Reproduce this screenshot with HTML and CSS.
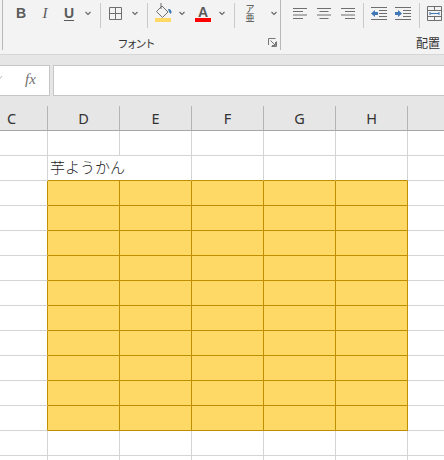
FILE: index.html
```html
<!DOCTYPE html>
<html lang="ja">
<head>
<meta charset="utf-8">
<title>Excel</title>
<link rel="stylesheet" href="styles.css">
</head>
<body>
<div class="app">
  <div class="ribbon">
    <div class="group font-group">
      <div class="tools">
        <span class="btn glyph bold">B</span>
        <span class="btn glyph italic">I</span>
        <span class="btn glyph under">U</span>
        <svg class="chev" viewBox="0 0 14 24"><path d="M4.500 12 7 14.500l2.500-2.500"/></svg>
        <span class="sep s-a"></span>
        <svg class="btn icon" viewBox="0 0 24 24"><path class="gline" d="M5.500 7.500h12v12h-12zM11.500 7.500v12M5.500 13.500h12"/></svg>
        <svg class="chev" viewBox="0 0 14 24"><path d="M4.500 12 7 14.500l2.500-2.500"/></svg>
        <span class="sep s-a"></span>
        <svg class="btn icon fill-icon" viewBox="0 0 24 24">
          <path class="gline" d="M5.500 11.500 11 6l6 6-5.500 5.500z"/>
          <path class="gline" d="M10 3v6"/>
          <path class="blue" d="M17 9c2-.5 3.500 1 3.500 3.500l-1 1.500-1.500-2z"/>
          <rect class="yellow" x="4" y="18" width="16" height="4"/>
        </svg>
        <svg class="chev narrow" viewBox="0 0 14 24"><path d="M4.500 12 7 14.500l2.500-2.500"/></svg>
        <span class="btn color-a"><span class="a-letter">A</span><span class="a-bar"></span></span>
        <svg class="chev" viewBox="0 0 14 24"><path d="M4.500 12 7 14.500l2.500-2.500"/></svg>
        <span class="sep s-b"></span>
        <span class="btn phon">ア<br>亜</span>
        <svg class="chev wide" viewBox="0 0 14 24"><path d="M4.500 12 7 14.500l2.500-2.500"/></svg>
      </div>
      <div class="group-label">
        <span class="label-text">フォント</span>
        <svg class="launcher" viewBox="0 0 9 9"><path d="M.5 7V.5H7.500M2.500 2.500 7 7M4 7.500h3.500V4M3.500 8.500h5v-5"/></svg>
      </div>
    </div>
    <div class="group align-group">
      <div class="tools">
        <svg class="btn24 icon" viewBox="0 0 24 24"><path class="gline" d="M5 8.500h14M5 11.500h10M5 15h14M5 18.500h10"/></svg>
        <svg class="btn24 icon" viewBox="0 0 24 24"><path class="gline" d="M5 8.500h14M7.500 11.500h9M5 15h14M7.500 18.500h9"/></svg>
        <svg class="btn24 icon" viewBox="0 0 24 24"><path class="gline" d="M5 8.500h14M9 11.500h10M5 15h14M9 18.500h10"/></svg>
        <span class="sep s-c"></span>
        <svg class="btn24 icon" viewBox="0 0 24 24"><path class="gline" d="M4 7.500h16M12 10.500h8M12 13.500h8M12 16.500h8M4 19.500h16"/><path class="blue" d="M4 13.500 8 10v2h3v3H8v2z"/></svg>
        <svg class="btn24 icon" viewBox="0 0 24 24"><path class="gline" d="M4 7.500h16M12 10.500h8M12 13.500h8M12 16.500h8M4 19.500h16"/><path class="blue" d="M11 13.500 7 10v2H4v3h3v2z"/></svg>
        <span class="sep s-d"></span>
        <svg class="btn24 icon merge" viewBox="0 0 24 24"><path class="gline" d="M4.500 6.500h14v14h-14zM4.500 10.500h14M4.500 16.500h14M11.500 6.500v4M11.500 16.500v4"/><path class="blueline" d="M7 13.500h9M7 12v3M16 12v3"/></svg>
      </div>
      <div class="group-label align-label"><span class="label-text">配置</span></div>
    </div>
  </div>

  <div class="formula-zone">
    <div class="name-box">
      <svg class="name-chev" viewBox="0 0 6 6"><path d="M0 1 2 3.500 4 1"/></svg>
      <span class="fx">fx</span>
    </div>
    <div class="formula-input"></div>
  </div>

  <div class="sheet">
    <div class="headers">
      <div class="h">C</div><div class="h">D</div><div class="h">E</div><div class="h">F</div><div class="h">G</div><div class="h">H</div><div class="h"></div>
    </div>
    <div class="cells">
      <div class="c"></div><div class="c"></div><div class="c"></div><div class="c"></div><div class="c"></div><div class="c"></div><div class="c"></div>

      <div class="c"></div><div class="c gb title">芋ようかん</div><div class="c gb"></div><div class="c gb"></div><div class="c gb"></div><div class="c"></div>

      <div class="c gr"></div><div class="c y"></div><div class="c y"></div><div class="c y"></div><div class="c y"></div><div class="c y"></div><div class="c"></div>
      <div class="c gr"></div><div class="c y"></div><div class="c y"></div><div class="c y"></div><div class="c y"></div><div class="c y"></div><div class="c"></div>
      <div class="c gr"></div><div class="c y"></div><div class="c y"></div><div class="c y"></div><div class="c y"></div><div class="c y"></div><div class="c"></div>
      <div class="c gr"></div><div class="c y"></div><div class="c y"></div><div class="c y"></div><div class="c y"></div><div class="c y"></div><div class="c"></div>
      <div class="c gr"></div><div class="c y"></div><div class="c y"></div><div class="c y"></div><div class="c y"></div><div class="c y"></div><div class="c"></div>
      <div class="c gr"></div><div class="c y"></div><div class="c y"></div><div class="c y"></div><div class="c y"></div><div class="c y"></div><div class="c"></div>
      <div class="c gr"></div><div class="c y"></div><div class="c y"></div><div class="c y"></div><div class="c y"></div><div class="c y"></div><div class="c"></div>
      <div class="c gr"></div><div class="c y"></div><div class="c y"></div><div class="c y"></div><div class="c y"></div><div class="c y"></div><div class="c"></div>
      <div class="c gr"></div><div class="c y"></div><div class="c y"></div><div class="c y"></div><div class="c y"></div><div class="c y"></div><div class="c"></div>
      <div class="c gr"></div><div class="c y"></div><div class="c y"></div><div class="c y"></div><div class="c y"></div><div class="c y"></div><div class="c"></div>

      <div class="c"></div><div class="c"></div><div class="c"></div><div class="c"></div><div class="c"></div><div class="c"></div><div class="c"></div>
      <div class="c"></div><div class="c"></div><div class="c"></div><div class="c"></div><div class="c"></div><div class="c"></div><div class="c"></div>
    </div>
  </div>
</div>
</body>
</html>
```

FILE: styles.css
```css
* { box-sizing: border-box; }
html, body { margin: 0; padding: 0; }
body {
  width: 444px;
  height: 460px;
  overflow: hidden;
  background: #fff;
  font-family: "Noto Sans", "Noto Sans CJK JP", sans-serif;
}
.app { width: 444px; height: 460px; overflow: hidden; }

/* Ribbon */
.ribbon {
  display: flex;
  height: 55px;
  padding-left: 2px;
  background: #f3f3f3;
  border-bottom: 1px solid #d6d6d6;
}
.group { display: flex; flex-direction: column; height: 50px; }
.font-group { width: 279px; border-left: 1px solid #b8b8b8; border-right: 1px solid #b8b8b8; }
.align-group { flex: 1; min-width: 0; }
.tools { display: flex; align-items: flex-start; height: 39px; }
.font-group .tools { padding: 0 0 0 6px; }
.align-group .tools { padding: 0 0 0 7px; }

.btn { display: block; width: 24px; height: 24px; flex: none; }
.btn24 { display: block; width: 24px; height: 24px; flex: none; }
.chev { display: block; width: 14px; height: 24px; flex: none; }
.chev path { fill: none; stroke: #666; stroke-width: 1.1; }
.chev.narrow { margin-right: 2px; }
.chev.wide { margin-left: 5px; }
.sep { display: block; width: 1px; height: 25px; margin-top: 3px; background: #c9c9c9; flex: none; }
.s-a { margin-left: 5px; margin-right: 3px; }
.s-b { margin-left: 5px; margin-right: 3px; }
.s-c { margin-left: 3px; margin-right: 3px; }
.s-d { margin-left: 4px; margin-right: 3px; }

.glyph {
  font-family: "Liberation Sans", sans-serif;
  font-size: 14px;
  line-height: 27px;
  text-align: center;
  color: #5a5a5a;
}
.bold { font-weight: 700; }
.italic { font-family: "Liberation Serif", serif; font-style: italic; font-size: 15px; }
.under { font-weight: 700; text-decoration: underline; text-underline-offset: 2px; }

.gline { fill: none; stroke: #6f6f6f; stroke-width: 1; }
.blue { fill: #3f78b4; }
.blueline { fill: none; stroke: #3f78b4; stroke-width: 1; }
.yellow { fill: #ffd966; }

.color-a { display: flex; flex-direction: column; align-items: center; }
.a-letter {
  font-family: "Liberation Sans", sans-serif;
  font-weight: 700;
  font-size: 14px;
  line-height: 13px;
  height: 12px;
  margin-top: 6px;
  color: #5a5a5a;
}
.a-bar { display: block; width: 16px; height: 4px; background: #f00; }

.phon {
  padding-top: 5px;
  font-family: "Noto Sans CJK JP", sans-serif;
  font-size: 9px;
  line-height: 8.500px;
  text-align: center;
  color: #444;
}

.group-label {
  position: relative;
  display: flex;
  justify-content: center;
  font-family: "Noto Sans CJK JP", sans-serif;
  font-size: 11px;
  line-height: 14px;
  color: #333;
}
.font-group .group-label { padding-right: 12px; letter-spacing: -2px; }
.align-label { justify-content: flex-end; padding-right: 4px; }
.align-label .label-text { font-size: 12px; }
.launcher { position: absolute; right: 3px; top: 2px; width: 9px; height: 9px; }
.launcher path { fill: none; stroke: #777; stroke-width: 1; }

/* Formula bar */
.formula-zone {
  display: flex;
  height: 50px;
  padding: 10px 0 9px;
  background: #e6e6e6;
}
.name-box {
  position: relative;
  width: 50px;
  height: 31px;
  flex: none;
  background: #fff;
  border: 1px solid #c6c6c6;
  border-left: 0;
}
.name-chev { position: absolute; left: -2px; top: 9px; width: 6px; height: 6px; }
.name-chev path { fill: none; stroke: #bbb; stroke-width: 1; }
.fx {
  position: absolute;
  left: 25px;
  top: 4px;
  font-family: "Liberation Serif", serif;
  font-style: italic;
  font-size: 15px;
  line-height: 18px;
  color: #707070;
}
.formula-input {
  flex: 1;
  height: 31px;
  margin-left: 3px;
  background: #fff;
  border: 1px solid #c6c6c6;
  border-right: 0;
}

/* Sheet */
.sheet { margin-left: -24px; width: 504px; }
.headers {
  display: grid;
  grid-template-columns: repeat(7, 72px);
  height: 26px;
  background: #e6e6e6;
  border-bottom: 1px solid #a8a8a8;
}
.h {
  padding-top: 1px;
  border-right: 1px solid #b4b4b4;
  margin-top: 1px;
  font-size: 14.500px;
  line-height: 22px;
  text-align: center;
  color: #333;
}
.cells {
  display: grid;
  grid-template-columns: repeat(7, 72px);
  grid-auto-rows: 25px;
}
.c { border-right: 1px solid #d4d4d4; border-bottom: 1px solid #d4d4d4; }
.y { background: #ffd966; border-color: #bf8f00; }
.gb { border-bottom-color: #bf8f00; }
.gr { border-right-color: #bf8f00; }
.title {
  grid-column: span 2;
  padding-left: 2px;
  font-family: "Noto Sans CJK JP", sans-serif;
  font-size: 15px;
  font-weight: 300;
  line-height: 21px;
  color: #222;
  white-space: nowrap;
}
```
